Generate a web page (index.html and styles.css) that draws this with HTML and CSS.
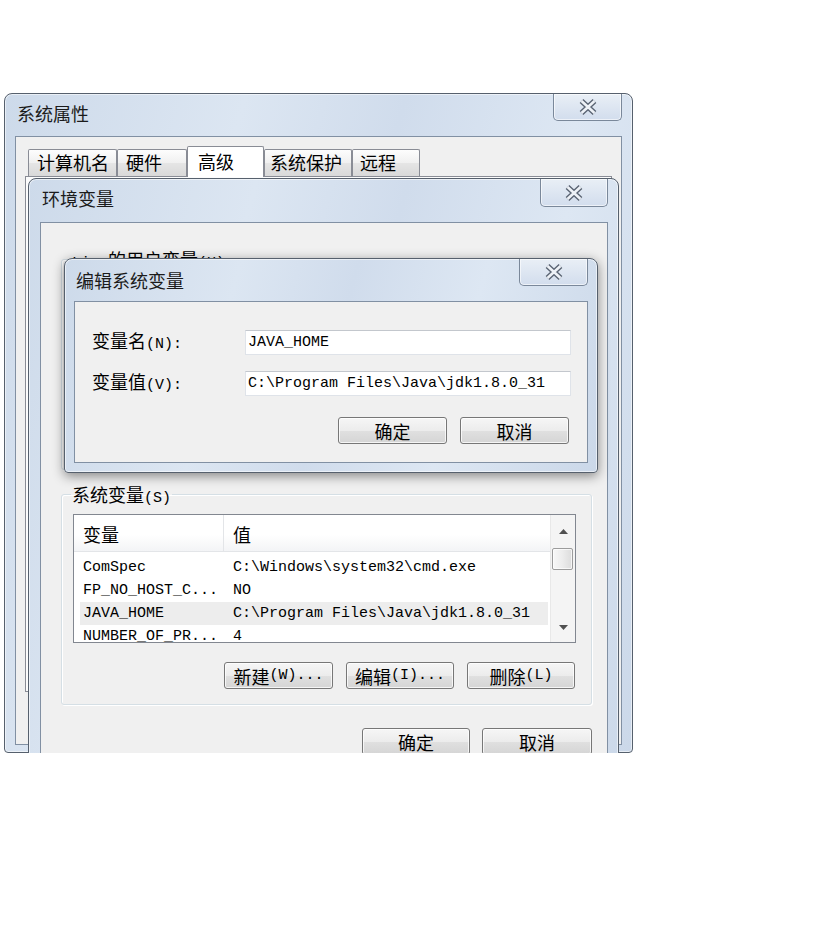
FILE: index.html
```html
<!DOCTYPE html>
<html lang="zh-CN">
<head>
<meta charset="utf-8">
<title>环境变量</title>
<link rel="stylesheet" href="styles.css">
</head>
<body>
<div class="desktop">

  <div class="win win-sys">
    <div class="titlebar">
      <span class="title">系统属性</span>
      <div class="close"><svg width="20" height="18" viewBox="0 0 20 18"><path d="M3.5 3 L16.5 15 M16.5 3 L3.5 15" stroke="#5a6473" stroke-width="5.4" fill="none"/><path d="M3.5 3 L16.5 15 M16.5 3 L3.5 15" stroke="#eef2f7" stroke-width="2.6" fill="none"/></svg></div>
    </div>
    <div class="client client-sys">
      <div class="tabs">
        <div class="tab tab-1">计算机名</div>
        <div class="tab tab-2">硬件</div>
        <div class="tab tab-sel">高级</div>
        <div class="tab tab-4">系统保护</div>
        <div class="tab tab-5">远程</div>
      </div>
      <div class="tabpage"></div>
    </div>
  </div>

  <div class="win win-env">
    <div class="titlebar">
      <span class="title">环境变量</span>
      <div class="close"><svg width="20" height="18" viewBox="0 0 20 18"><path d="M3.5 3 L16.5 15 M16.5 3 L3.5 15" stroke="#5a6473" stroke-width="5.4" fill="none"/><path d="M3.5 3 L16.5 15 M16.5 3 L3.5 15" stroke="#eef2f7" stroke-width="2.6" fill="none"/></svg></div>
    </div>
    <div class="client client-env">
      <fieldset class="group group-user">
        <legend><span class="m">Liu </span>的用户变量<span class="m">(U)</span></legend>
      </fieldset>
      <fieldset class="group group-sys">
        <legend>系统变量<span class="m">(S)</span></legend>
        <div class="list">
          <div class="list-main">
            <div class="list-head">
              <div class="hcell">变量</div>
              <div class="hcell">值</div>
            </div>
            <div class="rows">
              <div class="row"><span>ComSpec</span><span>C:\Windows\system32\cmd.exe</span></div>
              <div class="row"><span>FP_NO_HOST_C...</span><span>NO</span></div>
              <div class="row sel"><span>JAVA_HOME</span><span>C:\Program Files\Java\jdk1.8.0_31</span></div>
              <div class="row"><span>NUMBER_OF_PR...</span><span>4</span></div>
            </div>
          </div>
          <div class="scroll">
            <div class="sb-btn sb-up"><svg width="9" height="5" viewBox="0 0 9 5"><path d="M0 5 L4.5 0 L9 5 Z" fill="#505050"/></svg></div>
            <div class="sb-thumb"></div>
            <div class="sb-track"></div>
            <div class="sb-btn sb-down"><svg width="9" height="5" viewBox="0 0 9 5"><path d="M0 0 L4.5 5 L9 0 Z" fill="#505050"/></svg></div>
          </div>
        </div>
        <div class="btn-row">
          <div class="btn btn-new">新建<span class="m">(W)...</span></div>
          <div class="btn btn-edit">编辑<span class="m">(I)...</span></div>
          <div class="btn btn-del">删除<span class="m">(L)</span></div>
        </div>
      </fieldset>
      <div class="dlg-btns">
        <div class="btn btn-ok">确定</div>
        <div class="btn btn-cancel">取消</div>
      </div>
    </div>
  </div>

  <div class="win win-edit">
    <div class="titlebar">
      <span class="title">编辑系统变量</span>
      <div class="close"><svg width="20" height="18" viewBox="0 0 20 18"><path d="M3.5 3 L16.5 15 M16.5 3 L3.5 15" stroke="#5a6473" stroke-width="5.4" fill="none"/><path d="M3.5 3 L16.5 15 M16.5 3 L3.5 15" stroke="#eef2f7" stroke-width="2.6" fill="none"/></svg></div>
    </div>
    <div class="client client-edit">
      <div class="field">
        <span class="label">变量名<span class="m">(N):</span></span>
        <div class="input m">JAVA_HOME</div>
      </div>
      <div class="field">
        <span class="label">变量值<span class="m">(V):</span></span>
        <div class="input m">C:\Program Files\Java\jdk1.8.0_31</div>
      </div>
      <div class="edit-btns">
        <div class="btn btn-e">确定</div>
        <div class="btn btn-e">取消</div>
      </div>
    </div>
  </div>

</div>
</body>
</html>
```
FILE: styles.css
```css
* { box-sizing: border-box; }
html, body { margin: 0; background: #fff; }
body {
  font-family: "Noto Sans CJK SC", "Liberation Sans", sans-serif;
  font-size: 18px;
  color: #000;
}
.m {
  font-family: "Liberation Mono", "Noto Sans CJK SC", monospace;
  font-size: 15px;
}
.desktop {
  position: relative;
  width: 831px;
  height: 753px;
  overflow: hidden;
}

/* window frame */
.win {
  position: absolute;
  display: flex;
  flex-direction: column;
  border: 1px solid #56606d;
  border-radius: 8px 8px 4px 4px;
  background: linear-gradient(105deg, #cddaea 0%, #dce6f2 30%, #d0dcec 50%, #dde7f3 72%, #cbd8e9 100%);
  box-shadow: inset 0 0 0 1px rgba(255, 255, 255, 0.55);
}
.win-sys { left: 4px; top: 93px; width: 629px; height: 660px; padding: 0 10px 7px 10px; }
.win-env { left: 28px; top: 178px; width: 591px; height: 640px; padding: 0 10px 8px 11px; }
.win-edit {
  left: 64px; top: 258px; width: 534px; height: 215px; padding: 0 9px 9px 9px;
  box-shadow: inset 0 0 0 1px rgba(255, 255, 255, 0.55), 0 3px 12px rgba(0, 0, 0, 0.45);
}
.titlebar { display: flex; align-items: flex-start; height: 42px; flex: none; }
.win-env .titlebar { height: 43px; }
.title { margin: 8px 0 0 2px; line-height: 22px; color: #1b1b1b; }
.win-edit .title { margin-top: 10px; }
.close {
  margin-left: auto;
  width: 69px;
  height: 27px;
  border: 1px solid #7a889a;
  border-top: none;
  border-radius: 0 0 5px 5px;
  background: linear-gradient(#e9eff6, #d2dded);
  box-shadow: inset 0 0 0 1px rgba(255, 255, 255, 0.6);
  display: flex;
  align-items: center;
  justify-content: center;
}
.win-env .close { width: 68px; height: 28px; }
.client {
  flex: 1;
  min-height: 0;
  background: #f0f0f0;
  border: 1px solid #8190a3;
  display: flex;
  flex-direction: column;
}

/* system properties */
.client-sys { padding: 12px 9px 0 9px; }
.tabs { display: flex; align-items: flex-end; height: 27px; padding-left: 3px; flex: none; }
.tab {
  height: 27px;
  border: 1px solid #898c95;
  border-bottom: none;
  border-radius: 2px 2px 0 0;
  padding: 0 7px;
  line-height: 25px;
  white-space: nowrap;
  background: linear-gradient(#fdfdfd, #f0f0f0 50%, #e5e5e5 51%, #d9d9d9);
}
.tab-1 { width: 89px; padding-left: 8px; }
.tab-2 { width: 70px; padding-left: 8px; }
.tab-4 { width: 88px; padding-left: 5px; }
.tab-5 { width: 68px; }
.tab-sel {
  position: relative;
  z-index: 1;
  width: 77px;
  height: 31px;
  margin-bottom: -1px;
  padding-left: 10px;
  line-height: 29px;
  background: #fff;
}
.tabpage { height: 516px; border: 1px solid #898c95; background: #fcfcfc; flex: none; }

/* environment variables */
.client-env { padding: 26px 15px 0 20px; }
.group {
  margin: 0;
  min-width: 0;
  border: 1px solid #d5dfe5;
  border-radius: 3px;
  padding: 10px 15px 15px 11px;
  box-shadow: inset 1px 1px 0 #fff, 1px 1px 0 #fff;
}
.group legend {
  display: flex;
  align-items: baseline;
  height: 20px;
  padding: 0 1px;
  margin-left: -2px;
  line-height: 20px;
  white-space: pre;
}
.group-user { height: 221px; }
.group-sys { margin-top: 14px; }

.list {
  height: 129px;
  border: 1px solid #828790;
  background: #fff;
  display: flex;
  overflow: hidden;
}
.list-main { flex: 1; min-width: 0; }
.list-head {
  display: grid;
  grid-template-columns: 150px 1fr;
  height: 37px;
  border-bottom: 1px solid #e3e5e8;
  background: linear-gradient(#fff 0%, #fff 55%, #f3f4f6 100%);
}
.hcell { padding: 6px 0 0 9px; line-height: 26px; }
.hcell:first-child { border-right: 1px solid #e3e5e8; }
.rows { padding: 4px 2px 0 6px; }
.row {
  display: grid;
  grid-template-columns: 144px 1fr;
  height: 23px;
  line-height: 23px;
  font-family: "Liberation Mono", monospace;
  font-size: 15px;
  white-space: nowrap;
}
.row > span:first-child { padding-left: 3px; overflow: hidden; }
.row > span:last-child { padding-left: 9px; }
.row.sel { background: #ededed; }

.scroll {
  width: 25px;
  flex: none;
  display: flex;
  flex-direction: column;
  background: #f4f4f4;
  border-left: 1px solid #e8e8e8;
}
.sb-btn { display: flex; align-items: center; justify-content: center; flex: none; }
.sb-up { height: 32px; }
.sb-down { height: 30px; }
.sb-thumb {
  height: 22px;
  margin: 1px 2px 0 1px;
  border: 1px solid #9c9c9c;
  border-radius: 2px;
  background: linear-gradient(90deg, #f8f8f8, #ececec 50%, #dcdcdc);
  box-shadow: inset 0 0 0 1px rgba(255, 255, 255, 0.7);
  flex: none;
}
.sb-track { flex: 1; }

.btn {
  height: 27px;
  border: 1px solid #777;
  border-radius: 3px;
  background: linear-gradient(#f6f6f6 0%, #ececec 50%, #e0e0e0 51%, #d5d5d5 100%);
  box-shadow: inset 0 0 0 1px rgba(255, 255, 255, 0.75);
  display: flex;
  align-items: center;
  justify-content: center;
  line-height: 20px;
  white-space: nowrap;
  flex: none;
}
.btn-row { display: flex; justify-content: flex-end; gap: 13px; margin-top: 19px; padding-right: 1px; }
.btn-new { width: 109px; }
.btn-edit { width: 108px; }
.btn-del { width: 108px; }
.dlg-btns { display: flex; justify-content: flex-end; gap: 12px; margin-top: 23px; }
.btn-ok { width: 108px; }
.btn-cancel { width: 110px; }

/* edit dialog */
.client-edit { padding: 28px 16px 0 17px; }
.field { display: flex; align-items: center; height: 25px; }
.field + .field { margin-top: 16px; }
.label { width: 153px; flex: none; line-height: 22px; }
.input {
  flex: 1;
  height: 25px;
  line-height: 23px;
  padding-left: 2px;
  background: #fff;
  border: 1px solid #dfe3e9;
  border-top-color: #c3c7cd;
  white-space: nowrap;
}
.edit-btns { display: flex; justify-content: flex-end; gap: 13px; margin-top: 21px; padding-right: 2px; }
.btn-e { width: 109px; }
```
